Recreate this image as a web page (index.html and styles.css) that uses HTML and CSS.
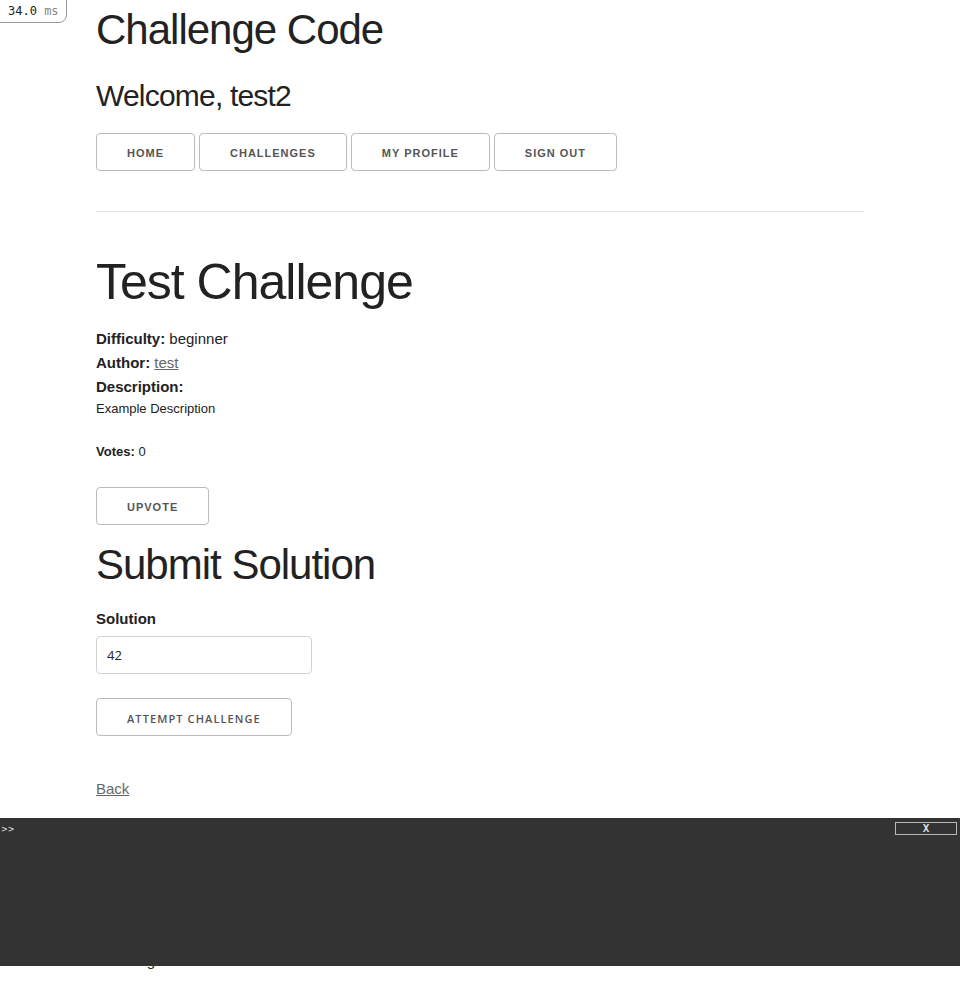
FILE: index.html
```html
<!DOCTYPE html>
<html lang="en">
<head>
<meta charset="utf-8">
<title>Challenge Code</title>
<link rel="stylesheet" href="styles.css">
</head>
<body>
<div class="timer"><span class="timer-num">34.0</span> <span class="timer-unit">ms</span></div>

<div class="container">
  <h2 class="site-title">Challenge Code</h2>
  <h4 class="welcome">Welcome, test2</h4>
  <nav class="nav">
    <a class="button" href="#">Home</a>
    <a class="button" href="#">Challenges</a>
    <a class="button" href="#">My Profile</a>
    <a class="button" href="#">Sign Out</a>
  </nav>
  <hr class="rule">

  <h1 class="challenge-title">Test Challenge</h1>
  <div class="meta-row"><strong>Difficulty:</strong> beginner</div>
  <div class="meta-row"><strong>Author:</strong> <a class="link" href="#">test</a></div>
  <div class="meta-row"><strong>Description:</strong></div>
  <p class="small-text">Example Description</p>
  <p class="small-text votes"><strong>Votes:</strong> 0</p>

  <form class="upvote-form">
    <button class="button" type="button">Upvote</button>
  </form>

  <h2 class="section-title">Submit Solution</h2>
  <form class="solution-form">
    <label class="field-label" for="solution">Solution</label>
    <input class="text-input" id="solution" type="text" value="42">
    <button class="button submit-btn" type="button">Attempt Challenge</button>
  </form>

  <a class="link back" href="#">Back</a>

  <p class="footer">Challenge Code</p>
</div>

<div class="console">
  <div class="console-prompt">&gt;&gt;</div>
  <button class="console-close" type="button">X</button>
</div>
</body>
</html>
```

FILE: styles.css
```css
html, body {
  margin: 0;
  padding: 0;
}

body {
  font-family: "Liberation Sans", Arial, sans-serif;
  font-size: 15px;
  line-height: 1.6;
  color: #222;
  background: #fff;
  position: relative;
  min-height: 991px;
}

.timer {
  position: absolute;
  top: -1px;
  left: -1px;
  padding: 2px 7px 2px 8px;
  height: 18px;
  line-height: 18px;
  border: 1px solid #9a9a9a;
  border-bottom-right-radius: 8px;
  font-family: "DejaVu Sans Mono", monospace;
  font-size: 12px;
  background: #fff;
  z-index: 5;
}

.timer-num { color: #222; }
.timer-unit { color: #888; }

.container {
  width: 768px;
  margin: 0 auto;
}

.site-title,
.section-title {
  font-size: 42px;
  line-height: 52.5px;
  letter-spacing: -1px;
  font-weight: 400;
  margin: 0 0 20px;
  padding-top: 4px;
  height: 48.5px;
}

.welcome {
  font-size: 30px;
  line-height: 40.5px;
  letter-spacing: -0.8px;
  font-weight: 400;
  margin: 0 0 20px;
  padding-top: 3px;
  height: 37.5px;
}

.nav {
  display: flex;
  gap: 4px;
  padding-bottom: 10px;
}

.button {
  display: inline-block;
  box-sizing: border-box;
  height: 38px;
  padding: 0 30px;
  color: #555;
  text-align: center;
  font-family: "Liberation Sans", Arial, sans-serif;
  font-size: 11px;
  font-weight: 700;
  line-height: 39px;
  letter-spacing: 1px;
  text-transform: uppercase;
  text-decoration: none;
  white-space: nowrap;
  background: transparent;
  border: 1px solid #bbb;
  border-radius: 4px;
  cursor: pointer;
}

.rule {
  margin: 30px 0 35px;
  border: 0;
  border-top: 1px solid #e1e1e1;
}

.challenge-title {
  font-size: 50px;
  line-height: 60px;
  letter-spacing: -1px;
  font-weight: 400;
  margin: 0 0 20px;
  padding-top: 5px;
  height: 55px;
}

.meta-row {
  line-height: 24px;
}

.link {
  color: #666;
  text-decoration: underline;
}

.small-text {
  font-size: 13px;
  line-height: 20.8px;
  margin: 0;
}

.votes {
  margin-top: 22px;
}

.upvote-form {
  margin: 24px 0 0;
  height: 48px;
}

.solution-form {
  margin: 0;
}

.field-label {
  display: block;
  font-weight: 700;
  line-height: 24px;
  margin-bottom: 5px;
}

.text-input {
  display: block;
  box-sizing: border-box;
  width: 216px;
  height: 38px;
  padding: 6px 10px;
  background: #fff;
  border: 1px solid #d1d1d1;
  border-radius: 4px;
  font-family: "Open Sans", sans-serif;
  font-size: 13px;
  color: #222;
  margin: 0 0 24px;
}

.submit-btn {
  font-family: "Open Sans", sans-serif;
  font-weight: 600;
  letter-spacing: 1.1px;
  display: block;
}

.back {
  display: inline-block;
  margin-top: 41px;
  line-height: 24px;
}

.footer {
  margin: 148px 0 0;
  line-height: 24px;
}

.console {
  position: absolute;
  left: 0;
  right: 0;
  top: 818px;
  height: 148px;
  background: #333;
  color: #eee;
  z-index: 4;
}

.console-prompt {
  font-family: "DejaVu Sans", sans-serif;
  font-size: 8px;
  line-height: 12px;
  padding: 6px 0 0 1px;
}

.console-close {
  position: absolute;
  top: 4px;
  right: 3px;
  width: 62px;
  height: 13px;
  box-sizing: border-box;
  padding: 0;
  background: transparent;
  border: 1px solid #b8b8b8;
  color: #ddd;
  font-family: "DejaVu Sans Mono", monospace;
  font-weight: 700;
  font-size: 11px;
  line-height: 11px;
  text-align: center;
}
```
